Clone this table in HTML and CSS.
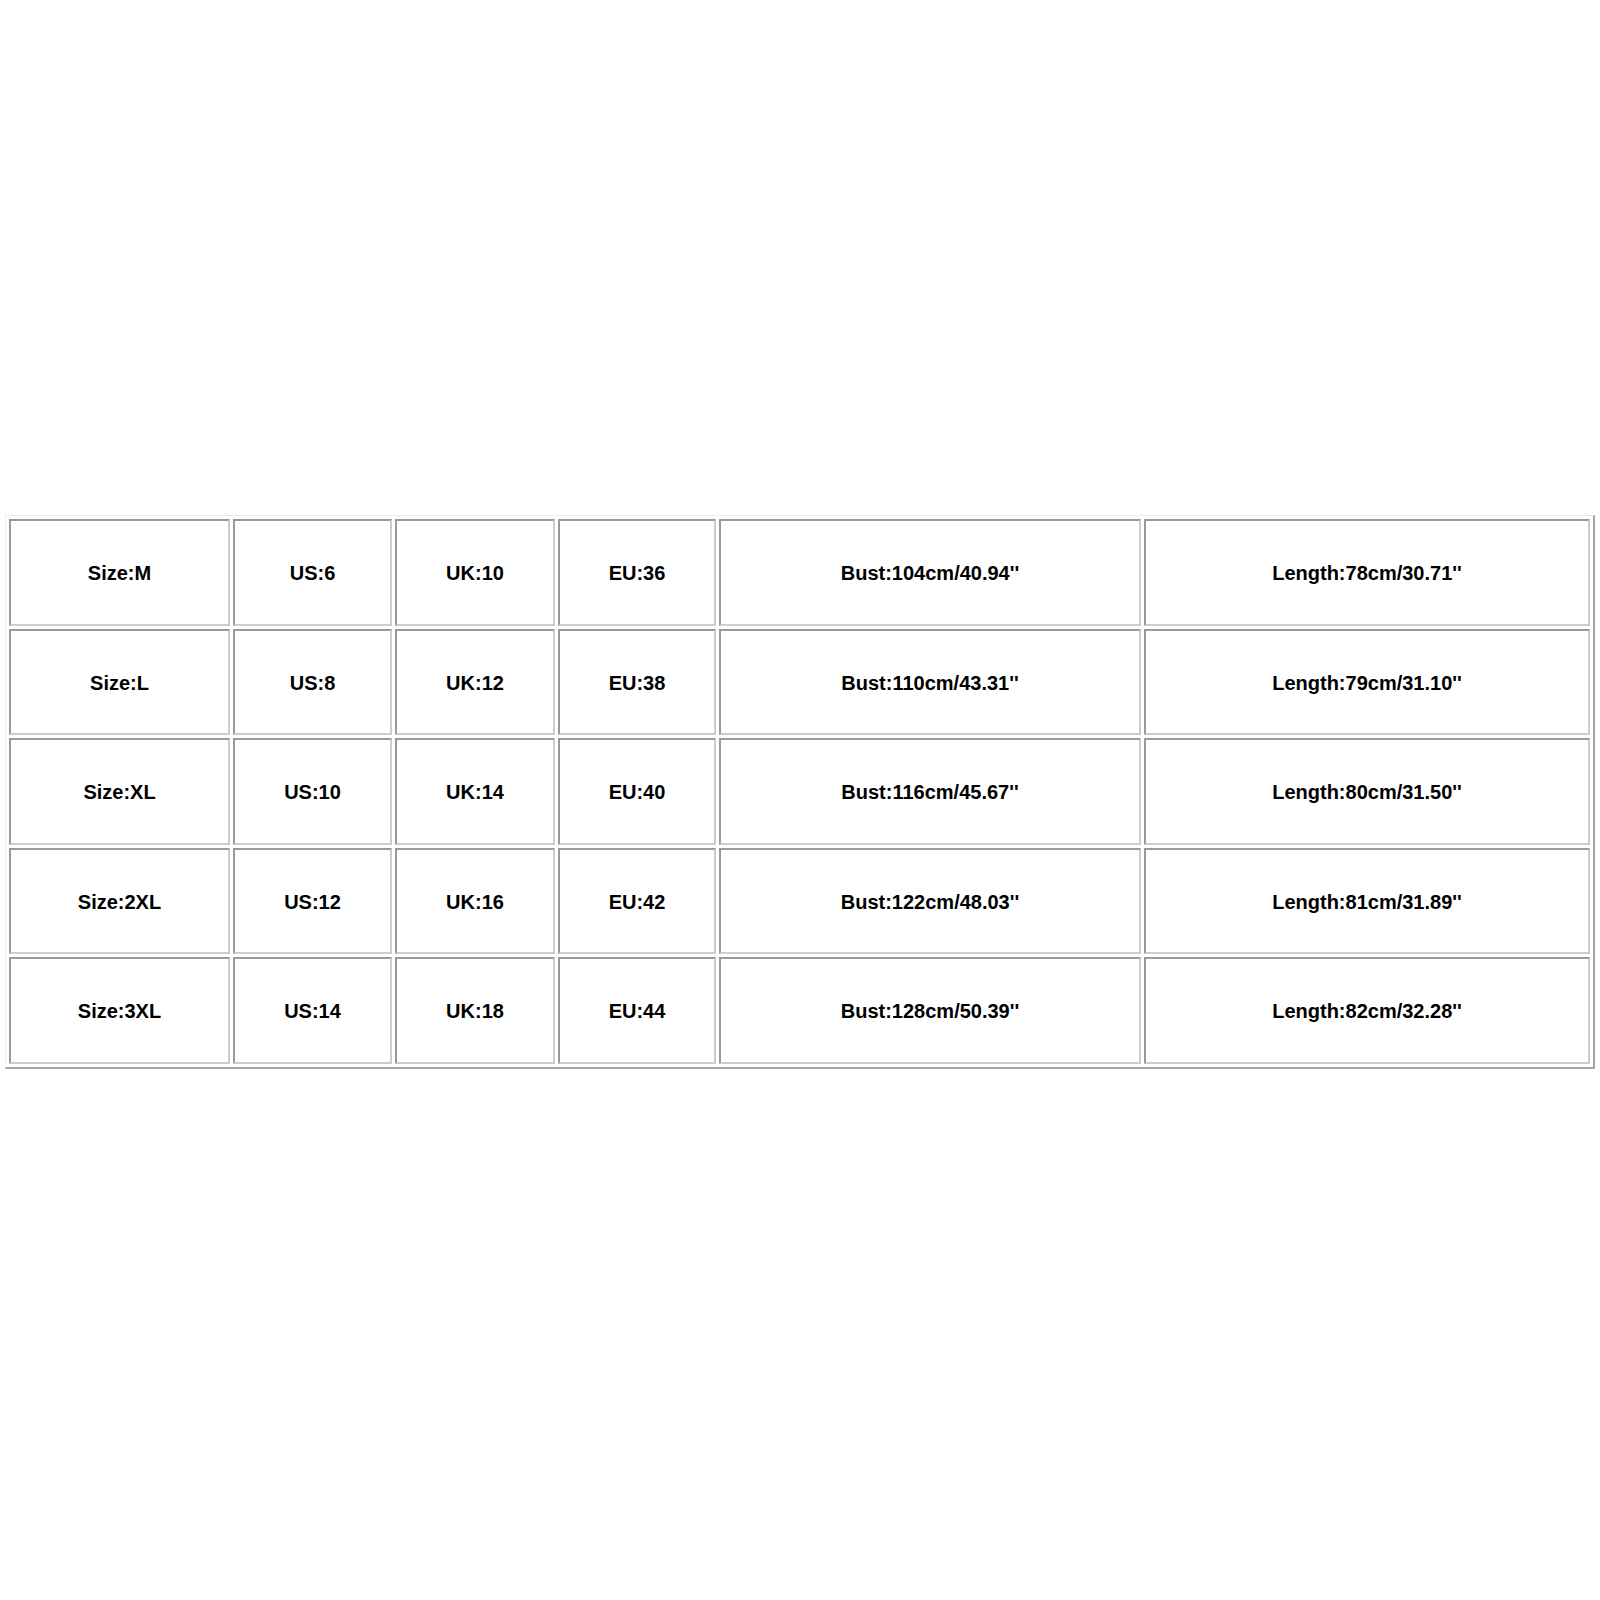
FILE: index.html
```html
<!DOCTYPE html>
<html>
<head>
<meta charset="utf-8">
<title>Size chart</title>
<link rel="stylesheet" href="styles.css">
</head>
<body>
<div class="page">
<table class="chart">
<colgroup>
<col class="c1"><col class="c2"><col class="c3"><col class="c4"><col class="c5"><col class="c6">
</colgroup>
<tbody>
<tr><td>Size:M</td><td>US:6</td><td>UK:10</td><td>EU:36</td><td>Bust:104cm/40.94''</td><td>Length:78cm/30.71''</td></tr>
<tr><td>Size:L</td><td>US:8</td><td>UK:12</td><td>EU:38</td><td>Bust:110cm/43.31''</td><td>Length:79cm/31.10''</td></tr>
<tr><td>Size:XL</td><td>US:10</td><td>UK:14</td><td>EU:40</td><td>Bust:116cm/45.67''</td><td>Length:80cm/31.50''</td></tr>
<tr><td>Size:2XL</td><td>US:12</td><td>UK:16</td><td>EU:42</td><td>Bust:122cm/48.03''</td><td>Length:81cm/31.89''</td></tr>
<tr><td>Size:3XL</td><td>US:14</td><td>UK:18</td><td>EU:44</td><td>Bust:128cm/50.39''</td><td>Length:82cm/32.28''</td></tr>
</tbody>
</table>
</div>
</body>
</html>
```
FILE: styles.css
```css
html, body {
  margin: 0;
  padding: 0;
  background: #ffffff;
}

.page {
  padding: 515px 0 0 5px;
}

.chart {
  table-layout: fixed;
  border-collapse: separate;
  border-spacing: 3px;
  width: 1588px;
  border-style: solid;
  border-width: 1px 2px 2px 1px;
  border-color: #ededed #a3a3a3 #a3a3a3 #ededed;
  font-family: "Liberation Sans", Arial, sans-serif;
  font-weight: bold;
  font-size: 20px;
  color: #000000;
}

.c1 { width: 221px; }
.c2 { width: 159px; }
.c3 { width: 160px; }
.c4 { width: 158px; }
.c5 { width: 422px; }
.c6 { width: 446px; }

.chart td {
  box-sizing: border-box;
  height: 106.5px;
  padding: 3px 0 0 0;
  text-align: center;
  vertical-align: middle;
  border-style: solid;
  border-width: 2px;
  border-color: #999999 #cccccc #cccccc #999999;
  white-space: nowrap;
}
```
